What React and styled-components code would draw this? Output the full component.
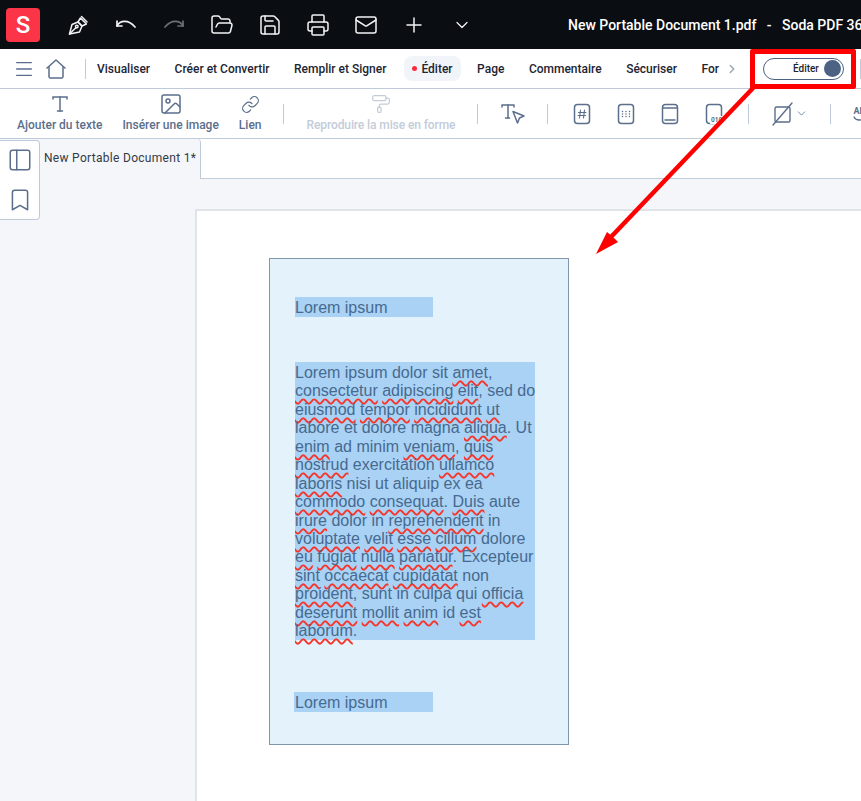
import React from "react"
import styled, { createGlobalStyle } from "styled-components"
import {
  ChevronDown, ChevronRight, FolderOpen, Image, Link, Mail, Menu,
  PaintRoller, Plus, Printer, Save, Bookmark, PanelLeft
} from "lucide-react"

const GlobalStyle = createGlobalStyle`
  html, body {
    margin: 0;
    padding: 0;
    height: 100%;
    overflow: hidden;
    background: #f4f6f9;
    font-family: Roboto, "Liberation Sans", sans-serif;
  }
`

const Page = styled.div`
  position: relative;
  width: 861px;
  height: 801px;
  overflow: hidden;
  display: flex;
  flex-direction: column;
`

const TopBar = styled.header`
  height: 49px;
  flex: none;
  background: #0a0d12;
  color: #fff;
  display: flex;
  align-items: center;
  padding-left: 6px;
  white-space: nowrap;
`

const Logo = styled.div`
  width: 34px;
  height: 34px;
  flex: none;
  border-radius: 4px;
  background: #fb3547;
  color: #fff;
  font-size: 24px;
  font-weight: 500;
  display: flex;
  align-items: center;
  justify-content: center;
  margin-right: 26px;
`

const TopIcon = styled.div`
  width: 24px;
  height: 24px;
  flex: none;
  margin-right: 24px;
  display: flex;
  align-items: center;
  justify-content: center;
  color: ${p => (p.$dim ? "#6b7078" : "#f2f3f5")};
`

const Title = styled.div`
  margin-left: 70px;
  flex: none;
  font-size: 14px;
  font-weight: 500;
  white-space: pre;
`

const MenuBar = styled.nav`
  height: 40px;
  flex: none;
  box-sizing: border-box;
  background: #fff;
  border-bottom: 1px solid #bfcbdb;
  display: flex;
  align-items: center;
  padding-left: 13px;
  white-space: nowrap;
`

const MenuIcon = styled.div`
  display: flex;
  flex: none;
  color: #5b6f8c;
  margin-right: ${p => p.$gap}px;
`

const MenuDivider = styled.div`
  width: 1px;
  height: 20px;
  flex: none;
  background: #bfcbdb;
  margin: ${p => p.$margin};
`

const MenuItem = styled.div`
  flex: none;
  font-size: 12px;
  font-weight: 500;
  color: #1d2533;
  margin-right: 24.5px;
  width: ${p => (p.$width ? `${p.$width}px` : "auto")};
`

const ActiveItem = styled.div`
  height: 25px;
  flex: none;
  margin: 0 16px 0 -7px;
  padding: 0 8.5px;
  border-radius: 8px;
  background: #f1f4f8;
  display: flex;
  align-items: center;
  gap: 4px;
  font-size: 12px;
  font-weight: 500;
  color: #1d2533;
  &::before {
    content: "";
    width: 5px;
    height: 5px;
    border-radius: 50%;
    background: #fb2b3c;
  }
`

const FadeChevron = styled.div`
  display: flex;
  flex: none;
  color: #9aa5b5;
  margin-left: -21px;
  margin-right: 24px;
`

const ModeToggle = styled.div`
  box-sizing: border-box;
  width: 81px;
  height: 22px;
  flex: none;
  border: 1px solid #4b6283;
  border-radius: 11px;
  display: flex;
  align-items: center;
  justify-content: flex-end;
  gap: 5px;
  padding-right: 2px;
  font-size: 10px;
  font-weight: 500;
  color: #1d2533;
  &::after {
    content: "";
    width: 17px;
    height: 17px;
    border-radius: 50%;
    background: #4b6283;
  }
`

const ToolBar = styled.div`
  height: 50px;
  flex: none;
  box-sizing: border-box;
  background: #fff;
  border-bottom: 1px solid #bfcbdb;
  display: flex;
  align-items: center;
  padding-left: 17px;
  white-space: nowrap;
`

const Tool = styled.div`
  flex: none;
  display: flex;
  flex-direction: column;
  align-items: center;
  gap: 3px;
  margin-top: -2px;
  margin-right: ${p => p.$gap ?? 20}px;
  font-size: 12px;
  font-weight: 500;
  letter-spacing: ${p => (p.$disabled ? "-0.1px" : "0")};
  color: ${p => (p.$disabled ? "#c3ccd9" : "#5b6f8c")};
`

const ToolIcon = styled.div`
  height: 22px;
  display: flex;
  align-items: center;
`

const ToolDivider = styled.div`
  width: 1px;
  height: 20px;
  flex: none;
  background: #bfcbdb;
  margin-right: ${p => p.$gap}px;
`

const IconSlot = styled.div`
  display: flex;
  flex: none;
  align-items: center;
  color: #5b6f8c;
  margin-right: ${p => p.$gap}px;
`

const CaseTool = styled.div`
  flex: none;
  display: flex;
  flex-direction: column;
  align-items: center;
  font-size: 9px;
  font-weight: 700;
  line-height: 10px;
  color: #5b6f8c;
`

const Workspace = styled.div`
  flex: 1;
  display: flex;
  min-height: 0;
`

const SideRail = styled.aside`
  width: 40px;
  flex: none;
`

const SideCard = styled.div`
  box-sizing: border-box;
  width: 40px;
  height: 80px;
  margin-top: 1px;
  background: #fff;
  border: 1px solid #bfcbdb;
  border-left: none;
  border-radius: 0 4px 4px 0;
  display: flex;
  flex-direction: column;
  align-items: center;
  justify-content: center;
  gap: 14px;
  color: #5b6f8c;
`

const Main = styled.main`
  flex: 1;
  min-width: 0;
`

const TabRow = styled.div`
  height: 40px;
  box-sizing: border-box;
  display: flex;
  background: #fff;
  border-bottom: 1px solid #bfcbdb;
`

const Tab = styled.div`
  width: 161px;
  height: 40px;
  box-sizing: border-box;
  background: #f4f6f9;
  border-right: 1px solid #bfcbdb;
  border-top-right-radius: 4px;
  padding: 12px 0 0 4px;
  font-size: 12px;
  color: #333a45;
  letter-spacing: 0.3px;
  white-space: nowrap;
`

const Canvas = styled.div`
  padding: 30px 0 0 156px;
`

const Sheet = styled.div`
  box-sizing: border-box;
  width: 700px;
  height: 640px;
  margin-left: -1px;
  background: #fff;
  border: 2px solid #e0e3e7;
  border-right: none;
  border-bottom: none;
  padding: 47px 0 0 72px;
`

const Doc = styled.section`
  box-sizing: border-box;
  width: 300px;
  height: 487px;
  background: #e4f2fb;
  border: 1px solid #8096ab;
  padding-top: 38px;
  display: flex;
  flex-direction: column;
  font-family: "Liberation Sans", Arial, sans-serif;
  font-size: 16px;
  color: #466a90;
`

const Heading = styled.div`
  width: ${p => p.$width}px;
  height: 20px;
  line-height: 21px;
  margin-left: ${p => p.$left}px;
  padding-left: ${p => 25 - p.$left}px;
  box-sizing: border-box;
  background: #aad2f4;
`

const Body = styled.div`
  width: 240px;
  height: 278px;
  box-sizing: border-box;
  margin: 45px 0 52px 25px;
  padding-top: 2px;
  background: #aad2f4;
  line-height: 18.43px;
  white-space: nowrap;
`

const Typo = styled.span`
  text-decoration: underline wavy #f6352b 1.5px;
  text-underline-offset: 2px;
  text-decoration-skip-ink: none;
`

const CalloutBox = styled.div`
  position: absolute;
  left: 750px;
  top: 49px;
  width: 106px;
  height: 40px;
  box-sizing: border-box;
  border: 5px solid #ff0000;
  border-radius: 2px;
  pointer-events: none;
`

const CalloutArrow = styled.svg`
  position: absolute;
  left: 0;
  top: 0;
  pointer-events: none;
`

const Pen = () => (
  <svg width="24" height="24" viewBox="0 0 24 24" fill="none" stroke="currentColor" strokeWidth="1.5" strokeLinejoin="round" strokeLinecap="round">
    <path d="M3.5 21 6 11.5l6-2.5 4 4-2.5 6z" />
    <path d="M3.5 21l6.3-6.3" />
    <circle cx="10.8" cy="13.6" r="1.3" />
    <path d="M12 9l2.4-4 6 6-4.4 2z" />
    <path d="M15.5 3.5l5.5 5.5" />
  </svg>
)

const Undo = () => (
  <svg width="24" height="24" viewBox="0 0 24 24" fill="none" stroke="currentColor" strokeWidth="1.7" strokeLinecap="round" strokeLinejoin="round">
    <path d="M3 13c3-5.5 11-7 18 1" />
    <path d="M3 8v5h5" />
  </svg>
)

const Redo = () => (
  <svg width="24" height="24" viewBox="0 0 24 24" fill="none" stroke="currentColor" strokeWidth="1.7" strokeLinecap="round" strokeLinejoin="round">
    <path d="M21 13c-3-5.5-11-7-18 1" />
    <path d="M21 8v5h-5" />
  </svg>
)

const Home = () => (
  <svg width="22" height="22" viewBox="0 0 22 22" fill="none" stroke="currentColor" strokeWidth="1.5" strokeLinejoin="round">
    <path d="M1.500 10.500 11 2l9.500 8.500" />
    <path d="M4 8.500V18.500a1.500 1.500 0 0 0 1.500 1.500h11a1.500 1.500 0 0 0 1.500-1.500V8.500" />
  </svg>
)

const TextTool = () => (
  <svg width="20" height="20" viewBox="0 0 20 20" fill="none" stroke="currentColor" strokeWidth="1.5" strokeLinecap="round">
    <path d="M3 5V3h14v2" />
    <path d="M10 3v14" />
    <path d="M7.500 17h5" />
  </svg>
)

const TextCursor = () => (
  <svg width="24" height="22" viewBox="0 0 24 22" fill="none" stroke="currentColor" strokeWidth="1.5" strokeLinecap="round" strokeLinejoin="round">
    <path d="M1 4V2h12v2" />
    <path d="M7 2v13" />
    <path d="M4.500 15h4" />
    <path d="M12 8.500 23 13l-4.500 2-2 5z" />
  </svg>
)

const Field = ({ children }) => (
  <svg width="20" height="22" viewBox="0 0 20 22" fill="none" stroke="currentColor" strokeWidth="1.5" strokeLinecap="round">
    <rect x="2.500" y="1.500" width="15" height="19" rx="3" />
    {children}
  </svg>
)

const Slash = () => (
  <svg width="24" height="24" viewBox="0 0 24 24" fill="none" stroke="currentColor" strokeWidth="1.4" strokeLinecap="round">
    <rect x="4" y="5" width="15" height="15" rx="1.500" />
    <path d="M2 23 21 1" />
  </svg>
)

const CaseArc = () => (
  <svg width="12" height="6" viewBox="0 0 12 6" fill="none" stroke="currentColor" strokeWidth="1.3" strokeLinecap="round">
    <path d="M1 1c2 4 8 4 10 0" />
  </svg>
)

const textLines = [
  [["Lorem ipsum dolor sit "], ["amet", 1], [","]],
  [["consectetur", 1], [" "], ["adipiscing", 1], [" "], ["elit", 1], [", sed do"]],
  [["eiusmod", 1], [" "], ["tempor", 1], [" "], ["incididunt", 1], [" "], ["ut", 1]],
  [["labore et dolore magna "], ["aliqua", 1], [". Ut"]],
  [["enim", 1], [" ad minim "], ["veniam", 1], [", "], ["quis", 1]],
  [["nostrud", 1], [" exercitation "], ["ullamco", 1]],
  [["laboris", 1], [" nisi ut aliquip ex ea"]],
  [["commodo", 1], [" "], ["consequat", 1], [". "], ["Duis", 1], [" aute"]],
  [["irure", 1], [" dolor in "], ["reprehenderit", 1], [" in"]],
  [["voluptate", 1], [" "], ["velit", 1], [" "], ["esse", 1], [" "], ["cillum", 1], [" dolore"]],
  [["eu", 1], [" "], ["fugiat", 1], [" "], ["nulla", 1], [" "], ["pariatur", 1], [". Excepteur"]],
  [["sint", 1], [" "], ["occaecat", 1], [" "], ["cupidatat", 1], [" non"]],
  [["proident", 1], [", sunt in culpa qui "], ["officia", 1]],
  [["deserunt", 1], [" "], ["mollit", 1], [" "], ["anim", 1], [" id "], ["est", 1]],
  [["laborum", 1], ["."]]
]

export default function App() {
  return (
    <Page>
      <GlobalStyle />
      <TopBar>
        <Logo>S</Logo>
        <TopIcon><Pen /></TopIcon>
        <TopIcon><Undo /></TopIcon>
        <TopIcon $dim><Redo /></TopIcon>
        <TopIcon><FolderOpen size={24} strokeWidth={1.5} /></TopIcon>
        <TopIcon><Save size={24} strokeWidth={1.5} /></TopIcon>
        <TopIcon><Printer size={24} strokeWidth={1.5} /></TopIcon>
        <TopIcon><Mail size={24} strokeWidth={1.5} /></TopIcon>
        <TopIcon><Plus size={26} strokeWidth={1.5} /></TopIcon>
        <TopIcon><ChevronDown size={20} strokeWidth={1.5} /></TopIcon>
        <Title>New Portable Document 1.pdf   -   Soda PDF 360</Title>
      </TopBar>

      <MenuBar>
        <MenuIcon $gap={10}><Menu size={22} strokeWidth={1.5} /></MenuIcon>
        <MenuIcon $gap={18}><Home /></MenuIcon>
        <MenuDivider $margin="0 11px 0 0" />
        <MenuItem>Visualiser</MenuItem>
        <MenuItem>Créer et Convertir</MenuItem>
        <MenuItem>Remplir et Signer</MenuItem>
        <ActiveItem>Éditer</ActiveItem>
        <MenuItem>Page</MenuItem>
        <MenuItem>Commentaire</MenuItem>
        <MenuItem>Sécuriser</MenuItem>
        <MenuItem $width={20}>For</MenuItem>
        <FadeChevron><ChevronRight size={14} strokeWidth={2.5} /></FadeChevron>
        <ModeToggle>Éditer</ModeToggle>
        <MenuDivider $margin="0 0 0 16px" />
      </MenuBar>

      <ToolBar>
        <Tool><ToolIcon><TextTool /></ToolIcon>Ajouter du texte</Tool>
        <Tool><ToolIcon><Image size={24} strokeWidth={1.5} /></ToolIcon>Insérer une image</Tool>
        <Tool $gap={21}><ToolIcon><Link size={19} strokeWidth={1.5} /></ToolIcon>Lien</Tool>
        <ToolDivider $gap={23} />
        <Tool $gap={22} $disabled><ToolIcon><PaintRoller size={20} strokeWidth={1.5} /></ToolIcon>Reproduire la mise en forme</Tool>
        <ToolDivider $gap={23} />
        <IconSlot $gap={22}><TextCursor /></IconSlot>
        <ToolDivider $gap={24} />
        <IconSlot $gap={24}>
          <Field><path d="M8.500 7 7.500 15M12.500 7l-1 8M6.500 9.500h7.500M6 12.500h7.500" strokeWidth="1.100" /></Field>
        </IconSlot>
        <IconSlot $gap={24}>
          <Field><path d="M6.500 8.500h.01M10 8.500h.01M13.500 8.500h.01M6.500 11h.01M10 11h.01M13.500 11h.01M6.500 13.500h.01M10 13.500h.01M13.500 13.500h.01" /></Field>
        </IconSlot>
        <IconSlot $gap={24}>
          <Field><path d="M3 5h14M5 17h10" /></Field>
        </IconSlot>
        <IconSlot $gap={24}>
          <Field>
            <rect x="6" y="13" width="14" height="8" fill="#fff" stroke="none" />
            <text x="7" y="19" fontSize="6.500" fontWeight="700" fill="currentColor" stroke="none" fontFamily="Roboto, sans-serif">010</text>
          </Field>
        </IconSlot>
        <ToolDivider $gap={22} />
        <IconSlot $gap={22}>
          <Slash />
          <ChevronDown size={13} strokeWidth={1.5} />
        </IconSlot>
        <ToolDivider $gap={22} />
        <CaseTool>AB<CaseArc /></CaseTool>
      </ToolBar>

      <Workspace>
        <SideRail>
          <SideCard>
            <PanelLeft size={26} strokeWidth={1.4} />
            <Bookmark size={26} strokeWidth={1.4} />
          </SideCard>
        </SideRail>
        <Main>
          <TabRow>
            <Tab>New Portable Document 1*</Tab>
          </TabRow>
          <Canvas>
            <Sheet>
              <Doc>
                <Heading $width={138} $left={25}>Lorem ipsum</Heading>
                <Body>
                  {textLines.map((line, i) => (
                    <div key={i}>
                      {line.map(([text, typo], j) => (typo ? <Typo key={j}>{text}</Typo> : <span key={j}>{text}</span>))}
                    </div>
                  ))}
                </Body>
                <Heading $width={139} $left={24}>Lorem ipsum</Heading>
              </Doc>
            </Sheet>
          </Canvas>
        </Main>
      </Workspace>

      <CalloutBox />
      <CalloutArrow width="861" height="801" viewBox="0 0 861 801">
        <path d="M754 87 610 238" stroke="#ff0000" strokeWidth="4.500" fill="none" />
        <path d="M596 254 607 232 613 237 618 242z" fill="#ff0000" />
      </CalloutArrow>
    </Page>
  )
}
